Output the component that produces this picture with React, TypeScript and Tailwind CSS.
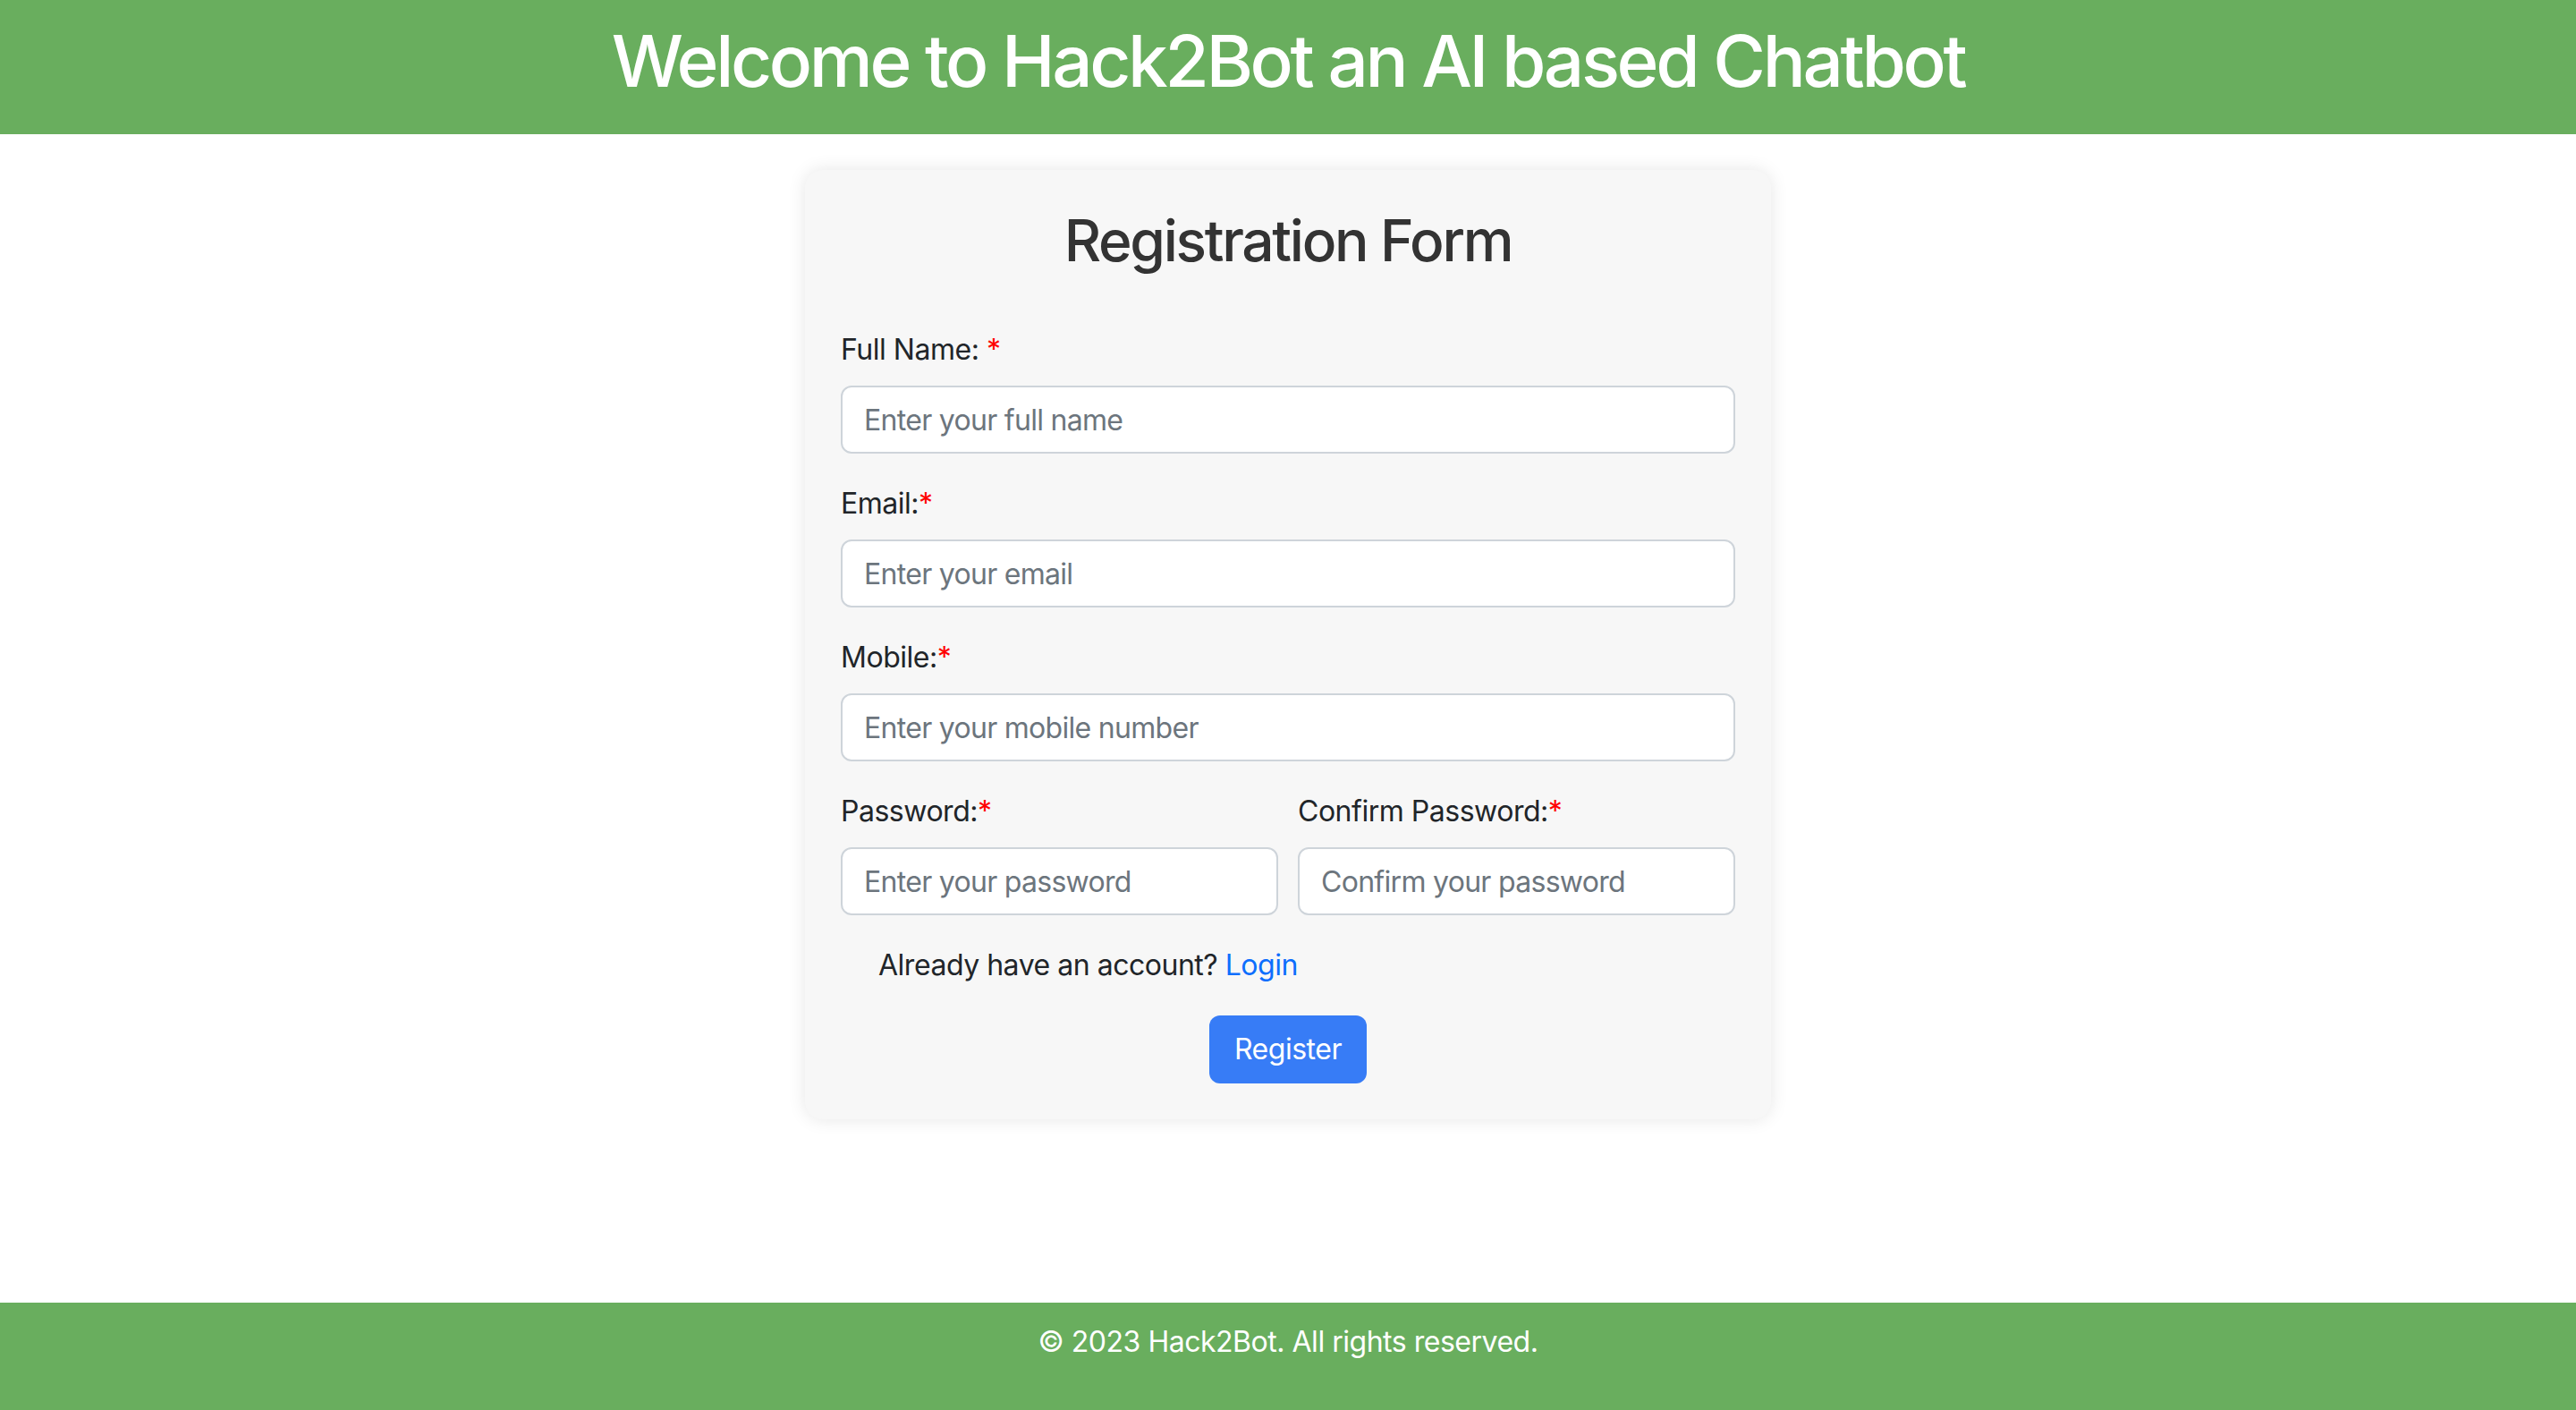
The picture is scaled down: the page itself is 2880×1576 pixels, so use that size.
import React from "react";

function Field({ label, placeholder, spaced, type = "text" }: { label: string; placeholder: string; spaced?: boolean; type?: string }) {
  return (
    <div className="flex flex-col">
      <label className="text-[32px] leading-[48px] text-[#212529] mb-[16px]">
        {label}
        {spaced ? " " : ""}
        <span className="text-[#ff0000]">*</span>
      </label>
      <input
        type={type}
        placeholder={placeholder}
        className="h-[76px] w-full bg-white border-[2px] border-[#ced4da] rounded-[12px] px-[24px] text-[32px] tracking-[-0.022em] text-[#212529] placeholder:text-[#6c757d] outline-none"
      />
    </div>
  );
}

export default function App() {
  return (
    <div className="min-h-screen flex flex-col bg-white tracking-[-0.03em]" style={{ fontFamily: "Inter, 'Noto Sans', sans-serif" }}>
      <header className="h-[150px] bg-[#69ae5e] pt-[20px] text-center">
        <h1 className="text-[80px] leading-[96px] text-white font-medium tracking-[-0.042em]">Welcome to Hack2Bot an AI based Chatbot</h1>
      </header>

      <main className="flex-1">
        <div className="w-[1080px] mx-auto mt-[40px] p-[40px] rounded-[20px] bg-[#f7f7f7] shadow-[0_0_20px_rgba(0,0,0,0.1)]">
          <h2 className="text-[64px] leading-[77px] text-[#333333] text-center font-medium mb-[60px] tracking-[-0.036em]">Registration Form</h2>
          <div className="flex flex-col gap-[32px]">
            <Field label="Full Name:" spaced placeholder="Enter your full name" />
            <Field label="Email:" placeholder="Enter your email" />
            <Field label="Mobile:" placeholder="Enter your mobile number" />
            <div className="grid grid-cols-2 gap-[22px]">
              <Field label="Password:" type="password" placeholder="Enter your password" />
              <Field label="Confirm Password:" type="password" placeholder="Confirm your password" />
            </div>
            <p className="pl-[42px] text-[32px] leading-[48px] text-[#212529]">
              Already have an account? <a href="#" className="text-[#0d6efd]">Login</a>
            </p>
            <div className="flex justify-center">
              <button className="h-[76px] px-[28px] rounded-[12px] bg-[#377cf6] text-white text-[32px] leading-[48px]">Register</button>
            </div>
          </div>
        </div>
      </main>

      <footer className="bg-[#69ae5e] pt-[20px] pb-[20px] text-center">
        <p className="text-[32px] leading-[48px] text-white mb-[32px]">© 2023 Hack2Bot. All rights reserved.</p>
      </footer>
    </div>
  );
}
